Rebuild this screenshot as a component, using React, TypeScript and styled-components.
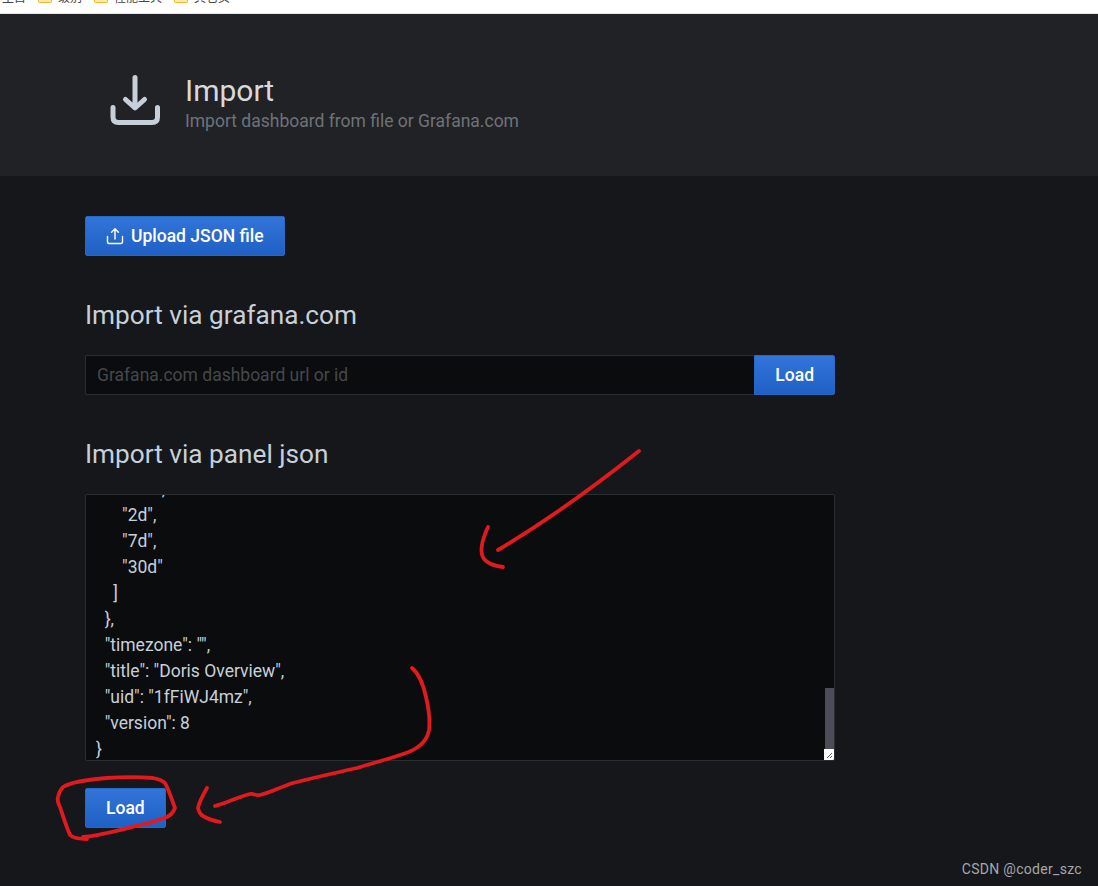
import React from "react";
import styled, { createGlobalStyle } from "styled-components";

const Global = createGlobalStyle`
  html, body { margin: 0; padding: 0; background: #15171a; }
  body { font-family: Roboto, "Liberation Sans", sans-serif; overflow: hidden; }
  * { box-sizing: border-box; }
`;

const Page = styled.div`
  position: relative;
  width: 1098px;
  height: 886px;
  overflow: hidden;
  background: #15171a;
`;

const BookmarkBar = styled.div`
  height: 14px;
  background: #fff;
  border-bottom: 1px solid #e6e6e6;
  display: flex;
  align-items: flex-end;
  overflow: hidden;
  padding: 0 0 10px 2px;
`;

const Bookmark = styled.div<{ $width: number }>`
  display: flex;
  align-items: flex-end;
  gap: 6px;
  width: ${(p) => p.$width}px;
  flex: none;
  font-family: "Noto Sans CJK SC", sans-serif;
  font-size: 12px;
  line-height: 12px;
  color: #444;
  white-space: nowrap;
`;

const FolderStub = styled.span`
  width: 14px;
  height: 6px;
  background: #ffe9a8;
  border: 1px solid #f5b72e;
  border-top: none;
  border-radius: 0 0 2px 2px;
  flex: none;
`;

const HeaderBand = styled.header`
  height: 162px;
  background: #212226;
  padding: 0 85px 0 108px;
  display: flex;
  align-items: center;
  gap: 23px;
`;

const HeaderIcon = styled.svg`
  width: 54px;
  height: 54px;
  flex: none;
  margin-top: 12px;
`;

const HeaderText = styled.div`
  display: flex;
  flex-direction: column;
  margin-top: 17px;
`;

const Title = styled.h1`
  margin: 0;
  font-size: 30px;
  line-height: 34px;
  font-weight: 400;
  color: #d8d9da;
`;

const Subtitle = styled.div`
  font-size: 17.5px;
  line-height: 24px;
  color: #6e7379;
  margin-top: 1px;
`;

const Content = styled.main`
  padding: 40px 0 0 85px;
  width: 835px;
  display: flex;
  flex-direction: column;
  align-items: flex-start;
`;

const PrimaryButton = styled.button<{ $attached?: boolean }>`
  height: 40px;
  padding: 0 20px 1px;
  display: inline-flex;
  align-items: center;
  justify-content: center;
  gap: 7px;
  border: 1px solid #2a66c4;
  border-radius: ${(p) => (p.$attached ? "0 2px 2px 0" : "2px")};
  background: linear-gradient(#3274d9, #1f60c4);
  color: #fff;
  font-family: Roboto, sans-serif;
  font-size: 17.5px;
  font-weight: 500;
  flex: none;
`;

const UploadIcon = styled.svg`
  width: 18px;
  height: 18px;
  flex: none;
  margin-top: 1px;
`;

const SectionHeading = styled.h2<{ $top: number }>`
  margin: ${(p) => p.$top}px 0 0;
  height: 30px;
  font-size: 26.2px;
  line-height: 30px;
  font-weight: 400;
  color: #c7d0d9;
`;

const InputRow = styled.div`
  margin-top: 25px;
  width: 750px;
  height: 40px;
  display: flex;
`;

const UrlInput = styled.div`
  flex: 1;
  background: #0b0c0e;
  border: 1px solid #2c2d31;
  border-right: none;
  border-radius: 2px 0 0 2px;
  padding: 0 11px;
  font-size: 17.5px;
  line-height: 38px;
  color: #45484c;
`;

const JsonBox = styled.div`
  position: relative;
  margin-top: 25px;
  width: 750px;
  height: 267px;
  background: #0b0c0e;
  border: 1px solid #2c2d31;
  border-radius: 2px;
  overflow: hidden;
`;

const JsonText = styled.pre`
  margin: -19px 0 0 10px;
  font-family: Roboto, sans-serif;
  font-size: 17.5px;
  line-height: 26px;
  color: #c7d0d9;
  white-space: pre;
`;

const ScrollThumb = styled.div`
  position: absolute;
  right: 0;
  top: 193px;
  width: 9px;
  height: 61px;
  background: #4d4d5a;
`;

const ResizeCorner = styled.svg`
  position: absolute;
  right: 0;
  bottom: 0;
  width: 10px;
  height: 11px;
  background: #fff;
`;

const LoadSpacer = styled.div`
  margin-top: 27px;
`;

const Watermark = styled.div`
  position: absolute;
  right: 16px;
  bottom: 8px;
  font-size: 14px;
  line-height: 18px;
  letter-spacing: 0.3px;
  color: #a6a8ab;
`;

const Annotations = styled.svg`
  position: absolute;
  inset: 0;
  width: 1098px;
  height: 886px;
  pointer-events: none;
`;

const json = `      "12h",
      "2d",
      "7d",
      "30d"
    ]
  },
  "timezone": "",
  "title": "Doris Overview",
  "uid": "1fFiWJ4mz",
  "version": 8
}`;

export default function App() {
  return (
    <Page>
      <Global />
      <BookmarkBar>
        <Bookmark $width={36}>主目</Bookmark>
        <Bookmark $width={56}><FolderStub />级别</Bookmark>
        <Bookmark $width={80}><FolderStub />性能工具</Bookmark>
        <Bookmark $width={80}><FolderStub />其它页</Bookmark>
      </BookmarkBar>
      <HeaderBand>
        <HeaderIcon viewBox="0 0 54 54" fill="none" stroke="#c7d0d9" strokeWidth="5" strokeLinecap="round" strokeLinejoin="round">
          <path d="M27 3.5V33" />
          <path d="M17.5 25.5L27 34L36.5 25.5" />
          <path d="M5 33.5V43C5 46.5 7 48.5 10.5 48.5H44C47.5 48.5 49.5 46.5 49.5 43V33.5" />
        </HeaderIcon>
        <HeaderText>
          <Title>Import</Title>
          <Subtitle>Import dashboard from file or Grafana.com</Subtitle>
        </HeaderText>
      </HeaderBand>
      <Content>
        <PrimaryButton>
          <UploadIcon viewBox="0 0 18 18" fill="none" stroke="#fff" strokeWidth="1.4" strokeLinecap="round" strokeLinejoin="round">
            <path d="M9 12V2M5.6 5.2L9 1.8L12.4 5.2" />
            <path d="M1.5 9.5V15C1.5 16 2 16.5 3 16.5H15C16 16.5 16.5 16 16.5 15V9.5" />
          </UploadIcon>
          Upload JSON file
        </PrimaryButton>
        <SectionHeading $top={44}>Import via grafana.com</SectionHeading>
        <InputRow>
          <UrlInput>Grafana.com dashboard url or id</UrlInput>
          <PrimaryButton $attached>Load</PrimaryButton>
        </InputRow>
        <SectionHeading $top={44}>Import via panel json</SectionHeading>
        <JsonBox>
          <JsonText>{json}</JsonText>
          <ScrollThumb />
          <ResizeCorner viewBox="0 0 10 11" stroke="#555" strokeWidth="1">
            <path d="M3 9L8 4M6 9L8 7" />
          </ResizeCorner>
        </JsonBox>
        <LoadSpacer>
          <PrimaryButton>Load</PrimaryButton>
        </LoadSpacer>
      </Content>
      <Watermark>CSDN @coder_szc</Watermark>
      <Annotations viewBox="0 0 1098 886" fill="none" stroke="#e01a1f" strokeWidth="3.8" strokeLinecap="round" strokeLinejoin="round">
        <path d="M639 451C600 482 545 522 498 550" />
        <path d="M488 527C482 540 479 552 484 559C488 564 495 566 503 567" />
        <path d="M412 668C418 673 423 683 426 697C429 710 430 723 429 730C427 742 418 750 400 755C385 760 370 764 357 768C335 773 312 778 293 783C280 787 270 793 260 795C255 796 254 793 250 794C238 797 226 803 215 806" />
        <path d="M207 788C203 795 199 802 198 808C199 812 201 815 203 816C208 819 214 821 220 822" />
        <path d="M87 839C80 839 73 838 70 835C66 826 63 816 60 807C58 803 57 800 58 797C59 792 61 789 63 787C66 785 70 784 73 783C84 780 95 779 107 778C122 777 140 777 153 778C158 779 162 780 165 783C169 790 172 800 175 808C173 813 171 815 167 817C159 820 150 823 140 825C128 828 118 831 107 833C98 835 90 837 83 837" />
      </Annotations>
    </Page>
  );
}
